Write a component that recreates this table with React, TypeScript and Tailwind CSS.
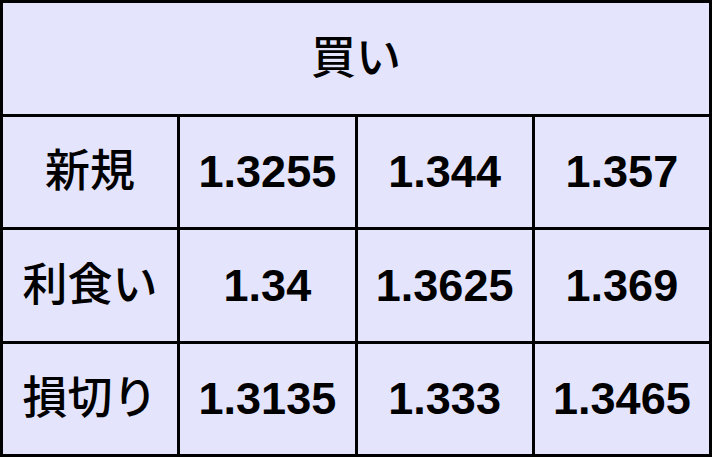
import { Fragment } from "react";

const ROWS: { label: string; values: string[] }[] = [
  { label: "新規", values: ["1.3255", "1.344", "1.357"] },
  { label: "利食い", values: ["1.34", "1.3625", "1.369"] },
  { label: "損切り", values: ["1.3135", "1.333", "1.3465"] },
];

const CELL =
  "flex items-center justify-center bg-[#e4e4fc] text-black text-[45px] leading-none";

export default function App() {
  return (
    <div
      className="w-[712px] h-[457px] bg-black p-[3px] grid grid-cols-4 grid-rows-4 gap-[3px]"
      style={{ fontFamily: '"Liberation Sans", "Noto Sans CJK JP", sans-serif' }}
    >
      {/* header */}
      <div className={`${CELL} col-span-4 font-medium`}>買い</div>

      {ROWS.map((row) => (
        <Fragment key={row.label}>
          <div className={`${CELL} font-medium`}>{row.label}</div>
          {row.values.map((v, i) => (
            <div key={i} className={`${CELL} font-bold`}>
              {v}
            </div>
          ))}
        </Fragment>
      ))}
    </div>
  );
}
